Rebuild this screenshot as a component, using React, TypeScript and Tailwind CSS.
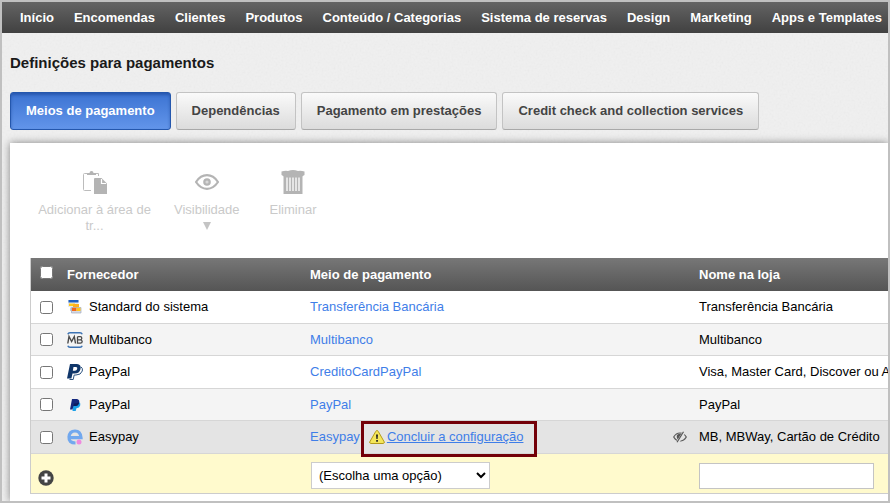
import type { ReactNode } from "react";
import { clsx } from "clsx";

const NAV_ITEMS = [
    "Início",
    "Encomendas",
    "Clientes",
    "Produtos",
    "Conteúdo / Categorias",
    "Sistema de reservas",
    "Design",
    "Marketing",
    "Apps e Templates",
];

const TABS = [
    "Meios de pagamento",
    "Dependências",
    "Pagamento em prestações",
    "Credit check and collection services",
];

type Method = {
    id: string;
    icon: ReactNode;
    provider: string;
    method: string;
    shopName: string;
    incomplete?: boolean;
};

const METHODS: Method[] = [
    { id: "bank", icon: <StandardIcon />, provider: "Standard do sistema", method: "Transferência Bancária", shopName: "Transferência Bancária" },
    { id: "mb", icon: <MultibancoIcon />, provider: "Multibanco", method: "Multibanco", shopName: "Multibanco" },
    { id: "cc", icon: <PayPalOldIcon />, provider: "PayPal", method: "CreditoCardPayPal", shopName: "Visa, Master Card, Discover ou A" },
    { id: "paypal", icon: <PayPalIcon />, provider: "PayPal", method: "PayPal", shopName: "PayPal" },
    { id: "easypay", icon: <EasypayIcon />, provider: "Easypay", method: "Easypay", shopName: "MB, MBWay, Cartão de Crédito", incomplete: true },
];

export default function App() {
    return (
        <div className="relative flex min-h-screen flex-col overflow-hidden border-2 border-[#c0c0c0] bg-[#f0f0f0] font-['Liberation_Sans',Arial,sans-serif] text-[13px] leading-4 text-black">
            <PaperTexture />

            <nav className="relative flex h-[31px] items-center gap-5 bg-linear-to-b from-[#646464] to-[#414141] px-[18px] font-bold whitespace-nowrap text-white">
                {NAV_ITEMS.map((item) => (
                    <a key={item} href="#">{item}</a>
                ))}
            </nav>

            <main className="relative flex flex-1 flex-col pl-2">
                <h1 className="pt-5 text-[15px] leading-5 font-bold text-[#1a1a1a]">Definições para pagamentos</h1>

                <div className="flex gap-[5px] pt-[19px] pb-[13px] whitespace-nowrap">
                    {TABS.map((tab, i) => (
                        <button
                            key={tab}
                            type="button"
                            className={clsx(
                                "h-[38px] rounded-[3px] border px-[15px] font-bold",
                                i === 0
                                    ? "border-[#2457ad] bg-linear-to-b from-[#3c73d2] to-[#6295ea] text-white shadow-[inset_0_2px_3px_rgba(20,60,140,0.5)]"
                                    : "border-[#c3c3c3] border-b-[#a9a9a9] bg-linear-to-b from-[#fafafa] to-[#dcdcdc] text-[#444]"
                            )}
                        >
                            {tab}
                        </button>
                    ))}
                </div>

                <section className="flex-1 bg-white pb-[7px] pl-5 shadow-[0_0_8px_rgba(0,0,0,0.45)]">
                    <Toolbar />
                    <MethodTable />
                </section>
            </main>
        </div>
    );
}

function Toolbar() {
    return (
        <div className="flex items-start pt-[27px] text-[#cacaca]">
            <button type="button" disabled className="flex w-[129px] flex-col items-center gap-2 px-2">
                <ClipboardIcon />
                <span>Adicionar à área de tr...</span>
            </button>
            <button type="button" disabled className="flex flex-col items-center gap-2 px-[15px]">
                <EyeIcon />
                <span>
                    Visibilidade
                    <svg viewBox="0 0 8 8" className="mx-auto mt-1 h-2 w-2 fill-[#c4c4c4]" aria-hidden="true">
                        <path d="M0 0h8L4 8z" />
                    </svg>
                </span>
            </button>
            <button type="button" disabled className="flex flex-col items-center gap-2 px-[15px]">
                <TrashIcon />
                <span>Eliminar</span>
            </button>
        </div>
    );
}

function MethodTable() {
    return (
        <table className="mt-6 w-full table-fixed border-separate border-spacing-0 border-l border-[#ccc] text-left whitespace-nowrap">
            <colgroup>
                <col className="w-[26px]" />
                <col className="w-[243px]" />
                <col className="w-[363px]" />
                <col className="w-[26px]" />
                <col />
            </colgroup>
            <thead>
                <tr className="h-[33px] bg-linear-to-b from-[#777] to-[#555] text-white">
                    <th className="pb-1 pl-[9px]">
                        <input type="checkbox" aria-label="Selecionar todos" className="block h-[13px] w-[13px]" />
                    </th>
                    <th className="pl-2.5">Fornecedor</th>
                    <th className="pl-2.5">Meio de pagamento</th>
                    <th aria-label="Visível" />
                    <th className="pl-2.5">Nome na loja</th>
                </tr>
            </thead>
            <tbody>
                {METHODS.map((m) => (
                    <MethodRow key={m.id} item={m} />
                ))}
                {/* New payment method */}
                <tr className="h-10 bg-[#fffacd] [&>td]:border-b [&>td]:border-[#ccc]">
                    <td className="pt-2 pl-[7px]">
                        <button type="button" aria-label="Adicionar" className="block">
                            <PlusIcon />
                        </button>
                    </td>
                    <td />
                    <td className="pt-1 pl-[11px]">
                        <select aria-label="Meio de pagamento" className="block h-[27px] w-[179px] border border-[#ccc] bg-white px-[3px]">
                            <option>(Escolha uma opção)</option>
                        </select>
                    </td>
                    <td />
                    <td className="pt-1 pl-2.5">
                        <input type="text" aria-label="Nome na loja" className="block h-[26px] w-[175px] border border-[#c4c4c4] bg-white px-2" />
                    </td>
                </tr>
            </tbody>
        </table>
    );
}

function MethodRow({ item }: { item: Method }) {
    return (
        <tr
            className={clsx(
                "odd:h-[33px] even:h-8 [&>td]:border-b [&>td]:border-[#d6d6d6]",
                item.incomplete ? "bg-[#e4e4e4]" : "odd:bg-white even:bg-[#f4f4f4]"
            )}
        >
            <td className="pl-[9px]">
                <input type="checkbox" aria-label={item.provider} className="block h-[13px] w-[13px]" />
            </td>
            <td className="pl-2.5">
                <span className="flex items-center gap-[6px]">
                    {item.icon}
                    {item.provider}
                </span>
            </td>
            <td className="pl-2.5">
                <span className="flex items-center gap-[9px]">
                    <a href="#" className="text-[#3f7ee8]">{item.method}</a>
                    {item.incomplete && (
                        <span className="relative flex items-center gap-[2px]">
                            <WarningIcon />
                            <a href="#" className="text-[#3f7ee8] underline">Concluir a configuração</a>
                            <span className="pointer-events-none absolute -top-2 -right-3.5 -bottom-3 -left-2 border-3 border-[#730008]" />
                        </span>
                    )}
                </span>
            </td>
            <td className="pl-2.5">{item.incomplete && <HiddenIcon />}</td>
            <td className="pl-2.5">{item.shopName}</td>
        </tr>
    );
}

function PaperTexture() {
    return (
        <svg className="absolute inset-0 h-full w-full opacity-8" aria-hidden="true">
            <filter id="grain">
                <feTurbulence type="fractalNoise" baseFrequency="0.5" numOctaves="2" />
                <feColorMatrix type="saturate" values="0" />
            </filter>
            <rect width="100%" height="100%" filter="url(#grain)" />
        </svg>
    );
}

function ClipboardIcon() {
    return (
        <svg viewBox="0 0 24 24" className="h-6 w-6" aria-hidden="true">
            <path d="M8 20.500H1.500Q.5 20.500 .5 19.500V4.500Q.5 3.500 1.500 3.500H15.500V6" fill="none" stroke="#bcbcbc" />
            <path d="M4 5V3.500L6.500 3Q6.500 1 8.500 1T10.500 3L13 3.500V5z" fill="#b4b4b4" />
            <path d="M11 9Q11 8 12 8h6.500L24 13.500V24H11z" fill="#b4b4b4" />
            <path d="M18.500 9v4.500H23" fill="none" stroke="#fff" strokeWidth="1.200" />
        </svg>
    );
}

function EyeIcon() {
    return (
        <svg viewBox="0 0 24 24" className="h-6 w-6" aria-hidden="true">
            <path d="M1 12C4 7.500 8 5.200 12 5.200S20 7.500 23 12C20 16.500 16 18.800 12 18.800S4 16.500 1 12z" fill="none" stroke="#b4b4b4" strokeWidth="2.200" />
            <circle cx="12" cy="12" r="2.700" fill="#d8d8d8" stroke="#b4b4b4" strokeWidth="2.200" />
        </svg>
    );
}

function TrashIcon() {
    return (
        <svg viewBox="0 0 24 24" className="h-6 w-6" aria-hidden="true">
            <path d="M.5 1.500Q4 .5 7 1Q12-.8 17 1Q20 .5 23.500 1.500V5L21 6.500H3L.5 5z" fill="#b4b4b4" />
            <path d="M2.500 6h19v18h-19z" fill="#b4b4b4" />
            <path d="M6 7.500v13.500M9 7.500v13.500M12 7.500v13.500M15 7.500v13.500M18 7.500v13.500" stroke="#fff" strokeWidth="1.300" />
        </svg>
    );
}

function StandardIcon() {
    return (
        <svg viewBox="0 0 16 16" className="h-4 w-4" aria-hidden="true">
            <path d="M1 1h10.500v7H1z" fill="#e8ebf0" />
            <path d="M1.500 1h10v2.500h-10z" fill="#1f5fc0" />
            <path d="M2 4.500h6V7H2z" fill="#ffc81e" />
            <path d="M3 8.500h2.500V12H3z" fill="#c9ced6" />
            <path d="M6 5h6v3.500H6z" fill="#ffb01e" />
            <path d="M4.500 8.500H14v5.500H4.500z" fill="#d5d9e2" stroke="#a5acc0" strokeWidth=".7" />
            <path d="M5 8.800h4.500V12H5z" fill="#f4681c" />
            <path d="M9.500 8.800h4V12h-4z" fill="#ffc61e" />
        </svg>
    );
}

function MultibancoIcon() {
    return (
        <svg viewBox="0 0 16 16" className="h-4 w-4 shrink-0" aria-hidden="true">
            <path d="M.8 2.200Q1.400 .8 3 .8H13Q14.600 .8 15.200 2.200M.8 13.800Q1.400 15.200 3 15.200H13Q14.600 15.200 15.200 13.800" fill="none" stroke="#3c73b4" strokeWidth="1.500" />
            <path d="M.8 11.500L2 4.500L4.600 9.500L7.300 4.500L8.500 11.500" fill="none" stroke="#4a4a4a" strokeWidth="1.400" />
            <path d="M10.500 4.700H13.300Q14.800 4.700 14.800 6.200T13.300 7.900H10.500M13.300 7.900Q15.200 8 15.200 9.500T13.300 11.200H10.500V4.700" fill="none" stroke="#4a4a4a" strokeWidth="1.300" />
        </svg>
    );
}

function PayPalOldIcon() {
    return (
        <svg viewBox="0 0 16 16" className="h-4 w-4" aria-hidden="true">
            <path d="M3 0H10Q14.500 .5 13.500 5Q12.500 9.500 7.500 9.500H5.500L4.400 14.500H0z" fill="#10366a" />
            <path d="M6.500 3H9Q10.700 3.200 10.200 5T7.800 6.700H5.800z" fill="#fff" />
            <path d="M14.200 3Q16 4.500 15.300 7Q14 11 9 11H7.200L6.200 15.500H2.500" fill="none" stroke="#2c527f" strokeWidth="1" />
        </svg>
    );
}

function PayPalIcon() {
    return (
        <svg viewBox="0 0 16 16" className="h-4 w-4" aria-hidden="true">
            <path d="M6.500 5H12Q14 6 13.200 8.500Q12.500 11 9.500 11.200L8.700 14H5.500z" fill="#1aa0e8" />
            <path d="M5 2H10Q12.800 2.500 12.200 5.500Q11.500 9 8 9H6.500L5.500 12.500H3z" fill="#14287e" />
            <path d="M7 6.500Q10 6.500 12.100 5.500Q11.500 9 8 9H6.500z" fill="#0b1d5e" />
        </svg>
    );
}

function EasypayIcon() {
    return (
        <svg viewBox="0 0 16 16" className="h-4 w-4" aria-hidden="true">
            <path d="M3 8.600H14Q13.500 2 8 2T2 8T8.500 14" fill="none" stroke="#72a8ee" strokeWidth="3.200" />
            <circle cx="12" cy="13" r="2.500" fill="#ee8ade" />
        </svg>
    );
}

function WarningIcon() {
    return (
        <svg viewBox="0 0 16 16" className="h-4 w-4" aria-hidden="true">
            <path d="M8 1.500Q8.800 1.500 9.300 2.500L15.300 13Q15.500 14.300 14.300 14.500H1.700Q.5 14.300 .7 13L6.700 2.500Q7.200 1.500 8 1.500z" fill="#f4e65a" stroke="#b39a1c" />
            <path d="M7 5.500h2L8.600 10H7.400z" fill="#222" />
            <path d="M7.200 11h1.700v1.700H7.200z" fill="#222" />
        </svg>
    );
}

function HiddenIcon() {
    return (
        <svg viewBox="0 0 14 12" className="h-3 w-3.5" aria-hidden="true">
            <path d="M.7 6Q3 2 7 2T13.300 6Q11 10 7 10T.7 6z" fill="none" stroke="#5a5a5a" strokeWidth="1.200" />
            <path d="M4 4Q6 2 9.500 3L5.500 9Q3 7 4 4z" fill="#555" />
            <path d="M11.500 .5L4.500 11.500" stroke="#e4e4e4" strokeWidth="3" />
            <path d="M10.500 .8L4 11.200" stroke="#555" strokeWidth="1.200" />
        </svg>
    );
}

function PlusIcon() {
    return (
        <svg viewBox="0 0 16 16" className="h-4 w-4" aria-hidden="true">
            <circle cx="8" cy="8" r="7.700" fill="#444" />
            <path d="M8 3.500v9M3.500 8h9" stroke="#fff" strokeWidth="3" />
        </svg>
    );
}
